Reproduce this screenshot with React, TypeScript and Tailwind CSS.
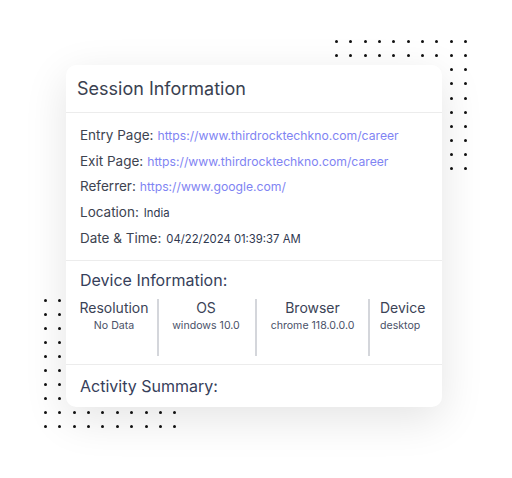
import React from "react";

const Dots = ({ className }: { className: string }) => (
  <div className={"absolute grid grid-cols-10 " + className}>
    {Array.from({ length: 100 }).map((_, i) => (
      <div key={i} className="h-[3px] w-[3px] rounded-full bg-[#111]" />
    ))}
  </div>
);

const Row = ({ label, value, link }: { label: string; value: string; link?: boolean }) => (
  <div className="flex h-[25.7px] items-baseline whitespace-nowrap leading-[25.7px]">
    <span className="text-[13.5px] text-[#3d4350]">{label}</span>
    <span className={link ? "ml-[4px] text-[12.2px] text-[#7f84f3]" : "ml-[5px] text-[11.3px] text-[#2f3850]"}>{value}</span>
  </div>
);

const Col = ({ h, v, w, sep }: { h: string; v: string; w: string; sep?: boolean }) => (
  <div className={"flex flex-col items-center h-[57px] " + w + (sep ? " border-r-2 border-[#d4d6db]" : "")}>
    <div className="text-[14px] leading-[18px] text-[#3b4356]">{h}</div>
    <div className="mt-[1px] text-[10.6px] leading-[16px] text-[#4a5168]">{v}</div>
  </div>
);

export default function App() {
  return (
    <div
      className="relative h-[478px] w-[512px] overflow-hidden bg-white"
      style={{ fontFamily: "Inter, 'Open Sans', sans-serif" }}
    >
      <Dots className="left-[335px] top-[40px] gap-x-[11.33px] gap-y-[11.14px]" />
      <Dots className="left-[44px] top-[298.5px] gap-x-[11.37px] gap-y-[11.08px]" />
      <div className="relative flex pl-[66px] pt-[65px]">
        <div className="flex h-[342px] w-[376px] flex-col rounded-[10px] bg-white shadow-[0_12px_44px_rgba(0,0,0,0.11)]">
          <div className="flex h-[48px] items-center border-b border-[#ececec] pl-[11px]">
            <span className="text-[18px] text-[#3a4150]">Session Information</span>
          </div>
          <div className="flex flex-col border-b border-[#ececec] pl-[14px] pt-[10px] pb-[9px]">
            <Row label="Entry Page:" value="https://www.thirdrocktechkno.com/career" link />
            <Row label="Exit Page:" value="https://www.thirdrocktechkno.com/career" link />
            <Row label="Referrer:" value="https://www.google.com/" link />
            <Row label="Location:" value="India" />
            <Row label="Date & Time:" value="04/22/2024 01:39:37 AM" />
          </div>
          <div className="flex flex-col border-b border-[#ececec] pl-[14px] pt-[8px] pb-[8px]">
            <div className="text-[16px] leading-[22px] text-[#36405a]">Device Information:</div>
            <div className="mt-[8px] flex pl-[1px]">
              <Col h="Resolution" v="No Data" w="w-[78px] pr-[10px]" sep />
              <Col h="OS" v="windows 10.0" w="w-[98px] pl-[8px] pr-[10px]" sep />
              <Col h="Browser" v="chrome 118.0.0.0" w="w-[113px]" sep />
              <Col h="Device" v="desktop" w="w-[60px] pl-[10px] !items-start" />
            </div>
          </div>
          <div className="pl-[14px] pt-[10px]">
            <div className="text-[16px] leading-[22px] text-[#36405a]">Activity Summary:</div>
          </div>
        </div>
      </div>
    </div>
  );
}
